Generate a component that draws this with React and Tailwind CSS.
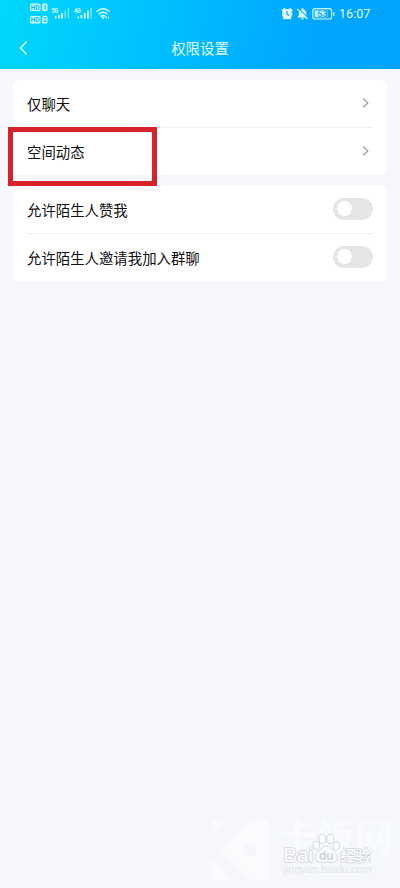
const SANS = "font-['Noto_Sans_CJK_SC',sans-serif]";

function SignalIcons() {
  return (
    <svg width="84" height="28" viewBox="28 0 84 28" fill="none" className="font-['Roboto',sans-serif]">
      <g fill="#c9fbff">
        <rect x="30" y="3.5" width="10.5" height="7.5" rx="1.5" />
        <rect x="42" y="3.5" width="5.5" height="7.5" rx="1.5" />
        <rect x="30" y="16" width="10.5" height="7.5" rx="1.5" />
        <rect x="42" y="16" width="5.5" height="7.5" rx="1.5" />
      </g>
      <g fill="#08b9ee" fontSize="6.5" fontWeight="700">
        <text x="30.8" y="9.6">HD</text>
        <text x="43" y="9.6">1</text>
        <text x="30.8" y="22.1">HD</text>
        <text x="43" y="22.1">2</text>
      </g>
      <g fill="#d5fcff" fontSize="7" fontWeight="700">
        <text x="51.5" y="12.8" textLength="6.8" lengthAdjust="spacingAndGlyphs">5G</text>
        <text x="74" y="12.8" textLength="6.8" lengthAdjust="spacingAndGlyphs">4G</text>
      </g>
      <g fill="#d5fbff">
        <rect x="55" y="16" width="1.5" height="2.5" />
        <rect x="58" y="15" width="1.7" height="3.5" />
        <rect x="61" y="13" width="1.8" height="5.5" />
        <rect x="64.4" y="10.5" width="1.6" height="8" opacity=".5" />
        <rect x="67.6" y="8" width="1.6" height="10.5" opacity=".5" />
        <rect x="77.5" y="16.5" width="1.5" height="2" />
        <rect x="80.5" y="15" width="1.8" height="3.5" />
        <rect x="83.8" y="13" width="1.8" height="5.5" />
        <rect x="87" y="10.5" width="1.8" height="8" />
        <rect x="90.2" y="8" width="1.6" height="10.5" opacity=".55" />
      </g>
      <g stroke="#d5fbff" strokeWidth="1.5" strokeLinecap="round">
        <path d="M97 11.3Q103 6.3 109 11.3" />
        <path d="M99 13.8Q103 10.6 107 13.8" />
        <path d="M101 16.2Q103 14.7 105 16.2" />
      </g>
      <circle cx="103" cy="17.8" r="1.2" fill="#d5fbff" />
      <path d="M106.3 16.6v1.8M108.7 16.6v1.8" stroke="#d5fbff" strokeWidth="1.2" />
    </svg>
  );
}

function DeviceIcons() {
  return (
    <svg width="54" height="28" viewBox="281 0 54 28" fill="none" className="font-['Roboto',sans-serif]">
      <circle cx="287.2" cy="14" r="5.2" fill="#dcfaff" />
      <path d="M282 10.8l3-2.5M292.4 10.8l-3-2.5M283.4 19.3l1.3-1.5M291 19.3l-1.3-1.5" stroke="#dcfaff" strokeWidth="1.5" />
      <path d="M287 11v3.3l2.3 1.3" stroke="#04a8f4" strokeWidth="1.2" />
      <path
        d="M302.5 8.3c.7 0 1.1.5 1.1 1.1 1.7.6 2.6 2 2.6 3.8v2.3l1.2 1.5v.6h-9.8v-.6l1.2-1.5v-2.3c0-1.8.9-3.2 2.6-3.8 0-.6.4-1.1 1.1-1.1zM301.2 18.3h2.6c0 .8-.6 1.3-1.3 1.3s-1.3-.5-1.3-1.3z"
        fill="#dcfaff"
      />
      <path d="M298.3 8.2l10 10" stroke="#04a8f4" strokeWidth="1.2" />
      <path d="M297.3 8.8l10.2 10.2" stroke="#dcfaff" strokeWidth="1.2" />
      <rect x="312.8" y="8.6" width="18.8" height="10.4" rx="2.3" stroke="#c9f5ff" strokeWidth="1.2" />
      <rect x="314.6" y="10.3" width="10.5" height="7" rx=".8" fill="#bdefff" />
      <path d="M333.8 12v4" stroke="#c9f5ff" strokeWidth="1.3" />
      <text x="317.3" y="17.2" fontSize="9" fontWeight="700" fill="#12aaf0" stroke="#d5f8ff" strokeWidth=".6" paintOrder="stroke">
        53
      </text>
    </svg>
  );
}

function Header() {
  return (
    <header className="h-[69px] bg-[linear-gradient(100deg,#00d8fc_0%,#00bfff_40%,#00a6ff_78%,#00a4ff_100%)]">
      <div className="flex h-7 justify-between pr-[29px] pl-7">
        <SignalIcons />
        <div className="flex">
          <DeviceIcons />
          <span className="ml-1 w-8 font-['Roboto',sans-serif] text-[12.6px] leading-[28px] whitespace-nowrap text-[#dcfbff]">16:07</span>
        </div>
      </div>
      <div className="grid h-[41px] grid-cols-[60px_1fr_60px] items-center">
        <svg width="30" height="41" viewBox="0 0 30 41" fill="none" className="self-start">
          <path d="M26.6 13.5L20.5 20l6.1 6.5" stroke="#e2fdff" strokeWidth="1.5" />
        </svg>
        <h1 className="pb-px text-center text-[14.4px] leading-5 font-normal text-[#e0fbff]">权限设置</h1>
      </div>
    </header>
  );
}

function Row({ label, children, divided }) {
  return (
    <div className="mx-3.5 flex flex-col">
      <div className="flex h-[47px] items-center justify-between">
        <span className="text-[14.4px] leading-5 text-[#101010]">{label}</span>
        {children}
      </div>
      {divided && <div className="h-px bg-[#f0f0f1]" />}
    </div>
  );
}

function Chevron() {
  return (
    <svg width="8" height="12" viewBox="0 0 8 12" fill="none" className="mr-[3px] mb-px">
      <path d="M1.3 1.5L5.8 6 1.3 10.5" stroke="#9b9b9b" strokeWidth="1.2" />
    </svg>
  );
}

function Toggle() {
  return (
    <button type="button" role="switch" aria-checked="false" className="mb-0.5 flex h-[22px] w-10 items-center rounded-full bg-[#e5e5e5] pl-1">
      <span className="size-[15px] rounded-full bg-white" />
    </button>
  );
}

function Watermark() {
  return (
    <svg width="190" height="78" viewBox="210 810 190 78" className="absolute right-0 bottom-0">
      <path d="M220 849l30-29h19v60h-18z" fill="#f9fbfd" />
      <path d="M212 820h13l-13 15zM212 858l19 22h-19z" fill="#f9fbfd" />
      <circle cx="250" cy="850" r="6" fill="#f4f6fa" />
      <text x="279" y="851" fontSize="38" fontWeight="700" textLength="114" fill="#f9fbfd">卡饭网</text>
      <g fill="#fefefe" stroke="#d3d6dc" strokeWidth="1.6" paintOrder="stroke" strokeLinejoin="round">
        <text x="283.5" y="861.5" fontSize="19.5" textLength="29.5" lengthAdjust="spacingAndGlyphs" className="font-['Liberation_Sans',sans-serif]">Bai</text>
        <text x="340.5" y="860.5" fontSize="15" fontWeight="500" textLength="30">经验</text>
      </g>
      <g fill="#fcfdfe" stroke="#d3d6dc" strokeWidth="1">
        <ellipse cx="316.3" cy="845.3" rx="3.2" ry="4.2" transform="rotate(-14 316.3 845.3)" />
        <ellipse cx="322.3" cy="839" rx="3.5" ry="4.6" />
        <ellipse cx="330.3" cy="839" rx="3.5" ry="4.6" />
        <ellipse cx="336.2" cy="846" rx="3.2" ry="4.2" transform="rotate(14 336.2 846)" />
        <path d="M326.3 846c3.6 0 4.8 2.8 7.3 5.3 2.6 2.5 4.8 4.6 3.7 7.6-1.6 4.3-6.5 3.3-11 3.3s-9.4 1-11-3.3c-1.1-3 1.1-5.1 3.7-7.6 2.5-2.5 3.7-5.3 7.3-5.3z" />
      </g>
      <text x="319" y="860" fontSize="13" fontWeight="700" fill="#cdd0d6" textLength="14.5" lengthAdjust="spacingAndGlyphs" className="font-['Liberation_Sans',sans-serif]">du</text>
      <text x="283.5" y="873" fontSize="10" textLength="88" lengthAdjust="spacingAndGlyphs" fill="#e3e5ea" className="font-['Liberation_Sans',sans-serif]">jingyan.baidu.com</text>
    </svg>
  );
}

export default function App() {
  return (
    <div className={`relative h-[888px] w-[400px] overflow-hidden bg-[#f5f7fb] ${SANS}`}>
      <Header />
      <main className="flex flex-col gap-2.5 px-[13px] pt-[11px]">
        <section className="h-[95px] rounded-md bg-white">
          <Row label="仅聊天" divided><Chevron /></Row>
          <Row label="空间动态"><Chevron /></Row>
        </section>
        <section className="h-24 rounded-md bg-white pt-px">
          <Row label="允许陌生人赞我" divided><Toggle /></Row>
          <Row label="允许陌生人邀请我加入群聊"><Toggle /></Row>
        </section>
      </main>
      <div className="absolute top-[127px] left-2 h-[59px] w-[149px] border-[5px] border-[#d8222c]" />
      <Watermark />
    </div>
  );
}
